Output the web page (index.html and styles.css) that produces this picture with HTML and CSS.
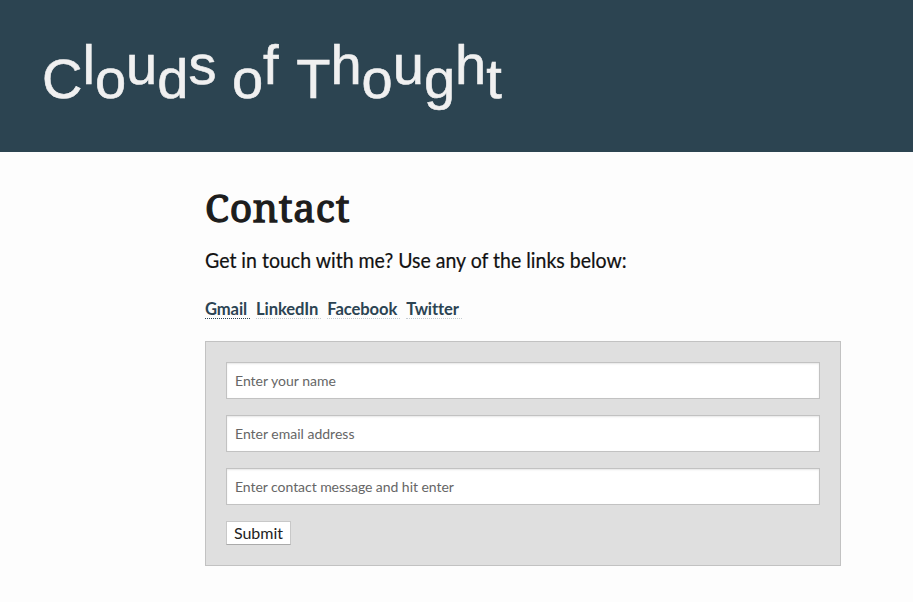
FILE: index.html
```html
<!DOCTYPE html>
<html lang="en">
<head>
<meta charset="utf-8">
<title>Contact</title>
<link rel="stylesheet" href="styles.css">
</head>
<body>
<header class="banner">
  <div class="logo"><span>C</span><span class="up">l</span><span>o</span><span class="up">u</span><span>d</span><span class="up">s</span> <span>o</span><span class="up">f</span> <span class="word">T</span><span class="up">h</span><span>o</span><span class="up">u</span><span>g</span><span class="up">h</span><span>t</span></div>
</header>
<main class="content">
  <h1>Contact</h1>
  <p class="intro">Get in touch with me? Use any of the links below:</p>
  <nav class="links"><a class="active" href="#">Gmail</a><a href="#">LinkedIn</a><a href="#">Facebook</a><a href="#">Twitter</a></nav>
  <form class="contact">
    <input type="text" placeholder="Enter your name">
    <input type="text" placeholder="Enter email address">
    <input class="message" type="text" placeholder="Enter contact message and hit enter">
    <button type="button">Submit</button>
  </form>
</main>
</body>
</html>
```
FILE: styles.css
```css
* { box-sizing: border-box; }
body { margin: 0; background: #fdfdfd; color: #111; font-family: Lato, sans-serif; overflow: hidden; }
.banner { height: 152px; background: #2c4451; padding: 43px 0 0 42px; }
.logo { font: 56px/72px "Liberation Sans", sans-serif; color: #f0f0f0; white-space: nowrap; -webkit-text-stroke: 0.6px #f0f0f0; }
.up { position: relative; top: -14px; }
.word { margin-left: 2px; }
.content { width: 636px; margin-left: 205px; padding-top: 32px; }
h1 { margin: 0; font: 400 39px/46px "Noto Serif", "DejaVu Serif", serif; height: 48px; color: #1d1d1d; letter-spacing: 0.7px; -webkit-text-stroke: 1.3px #1d1d1d; }
.intro { margin: 13px 0 0; font-size: 20.5px; line-height: 30px; white-space: nowrap; transform: scaleX(0.952); transform-origin: left; -webkit-text-stroke: 0.2px #111; }
.links { display: flex; gap: 6px; margin-top: 25px; height: 19px; }
.links a { color: #2c4453; font-size: 16.6px; font-weight: 700; line-height: 19px; height: 19px; letter-spacing: -0.1px; text-decoration: none; border-bottom: 1px dotted #c5ccd0; padding-right: 3px; }
.links .active { border-color: #2c4453; }
.contact { display: flex; flex-direction: column; align-items: flex-start; gap: 16px; height: 225px; margin-top: 22px; padding: 20px; background: #dfdfdf; border: 1px solid #c2c2c2; }
input { width: 100%; height: 37px; padding: 0 8px; border: 1px solid #c2c2c2; border-radius: 0; font: 14px Lato, sans-serif; background: #fff; box-shadow: inset 0 1px 2px #e6e6e6; }
input::placeholder { color: #666; }
.message { letter-spacing: -0.05px; }
button { width: 65px; height: 24px; padding: 0; border: 1px solid #c8c8c8; border-bottom-color: #aaa; background: #fff; font: 16px/20px Lato, sans-serif; color: #222; }
```
